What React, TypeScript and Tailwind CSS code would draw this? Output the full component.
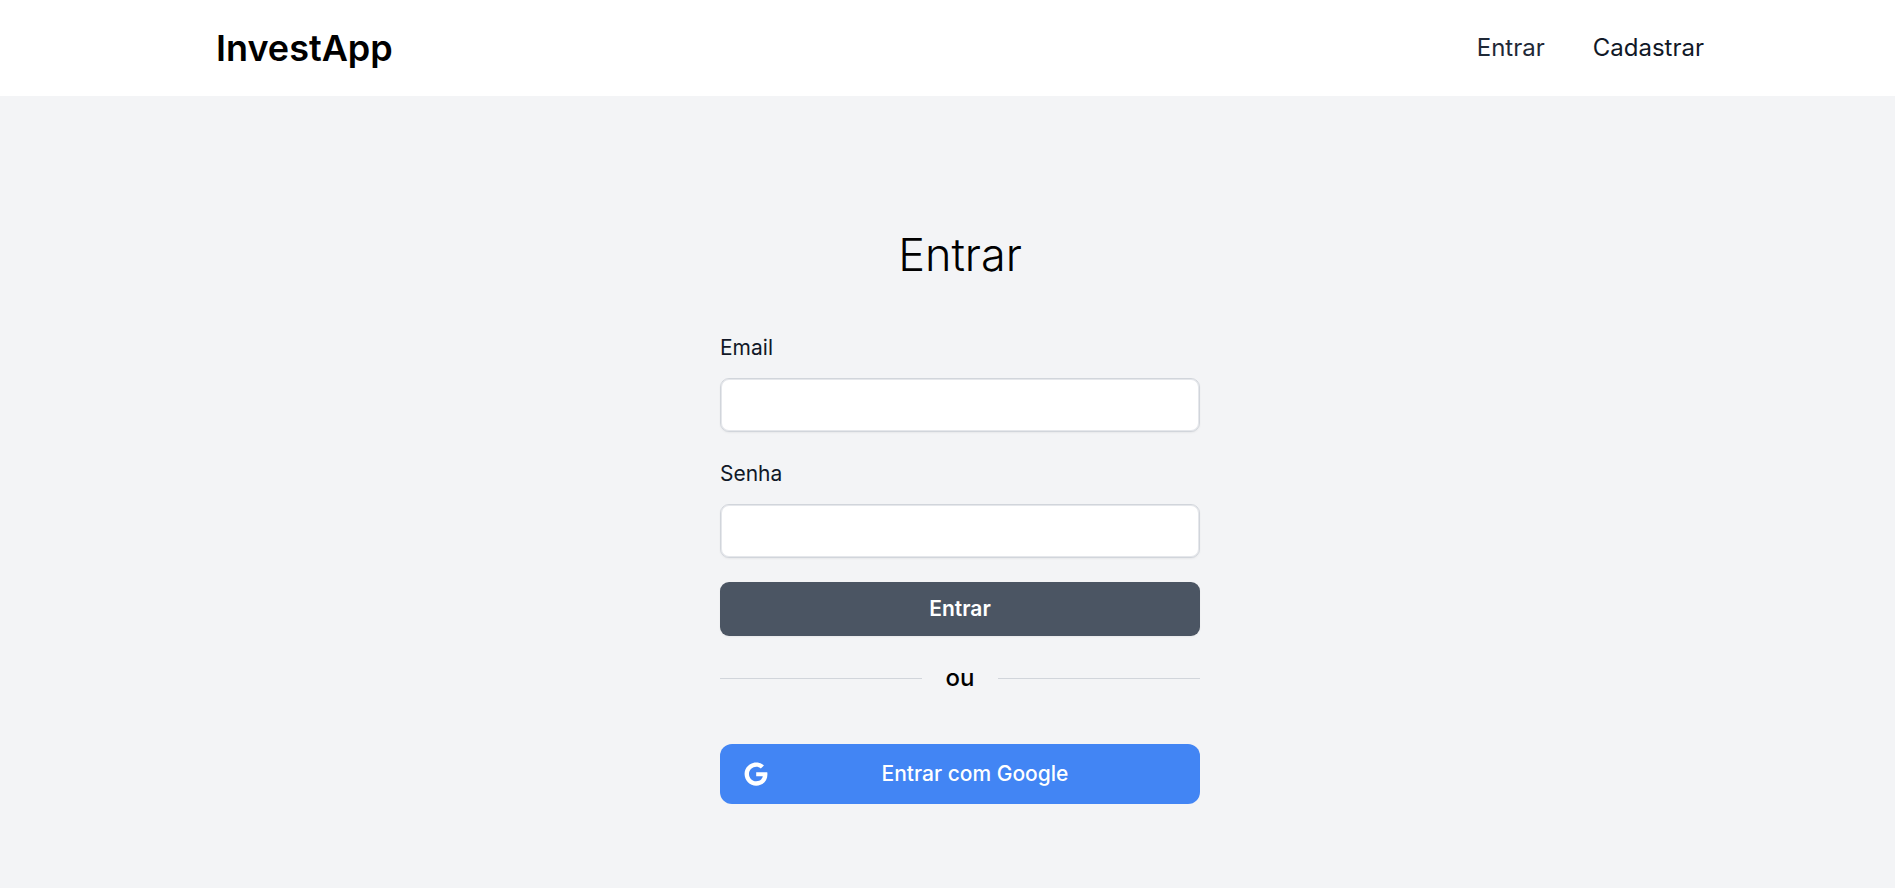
import { FaGoogle } from "react-icons/fa";

function Divider() {
  return (
    <div className="my-6 flex items-center gap-6">
      <div className="h-px flex-1 bg-[#d1d5db]" />
      <span className="text-[24px] leading-9 font-medium">ou</span>
      <div className="h-px flex-1 bg-[#d1d5db]" />
    </div>
  );
}

function Field({ id, label, type }: { id: string; label: string; type: string }) {
  return (
    <div className="flex flex-col gap-3">
      <label htmlFor={id} className="text-[21px] leading-9 text-[#111827]">{label}</label>
      <input id={id} type={type} className="h-[54px] w-full rounded-[9px] border border-[#d1d5db] bg-white px-3 text-[21px] shadow-xs inset-ring inset-ring-[#e5e7eb] outline-none" />
    </div>
  );
}

export default function App() {
  return (
    <div className="min-h-screen bg-[#f3f4f6] font-['Inter',sans-serif] text-black">
      <header className="bg-white pl-[25px]">
        <nav className="mx-auto flex h-24 max-w-[1536px] items-center justify-between px-6">
          <a href="#" className="text-[36px] font-semibold">InvestApp</a>
          <div className="flex gap-12 text-[24px]">
            <a href="#entrar" className="text-[#1f2937]">Entrar</a>
            <a href="#cadastrar" className="text-[#111827]">Cadastrar</a>
          </div>
        </nav>
      </header>
      <main className="pt-[132px] pb-12 pl-[25px]">
        <div className="mx-auto flex w-full max-w-[480px] flex-col">
          <h1 className="text-center text-[45px] leading-[54px] font-light">Entrar</h1>
          <form className="mt-12 flex flex-col gap-6" onSubmit={(e) => e.preventDefault()}>
            <Field id="email" label="Email" type="email" />
            <Field id="senha" label="Senha" type="password" />
            <button type="submit" className="h-[54px] rounded-[9px] bg-[#4b5563] text-[21px] font-semibold text-white shadow-xs">Entrar</button>
          </form>
          <Divider />
          <button type="button" className="mt-6 flex h-[60px] items-center gap-1.5 rounded-xl bg-[#4285f4] px-6 text-[21px] font-medium text-white">
            <FaGoogle className="size-6" />
            <span className="flex-1">Entrar com Google</span>
          </button>
        </div>
      </main>
    </div>
  );
}
